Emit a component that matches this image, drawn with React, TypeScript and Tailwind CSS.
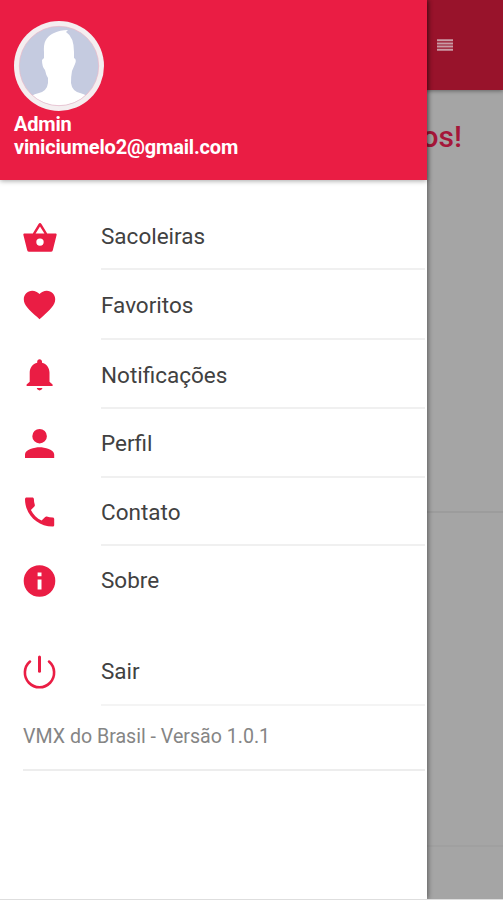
import type { ReactNode } from 'react';

const Icon = ({ children }: { children: ReactNode }) => (
  <svg viewBox="0 0 34 34" className="h-[34px] w-[34px] shrink-0 fill-[#ea1d44]">
    {children}
  </svg>
);

const items = [
  {
    label: 'Sacoleiras',
    height: 'h-[69px]',
    padding: 'pt-1',
    icon: (
      <path
        fillRule="evenodd"
        d="M9.8 14.5 15.4 5.2Q17 3 18.6 5.2L24.2 14.5H32.9Q34 14.5 33.6 16L29.8 31.2Q29.4 32.8 27.8 32.8H6.2Q4.6 32.8 4.2 31.2L.4 16Q0 14.5 1.1 14.5ZM12.6 14.5H21.4L17 7.4ZM17 19.4A3.7 3.7 0 1 0 17 26.8A3.7 3.7 0 1 0 17 19.4Z"
      />
    ),
  },
  {
    label: 'Favoritos',
    height: 'h-[70px]',
    padding: 'pt-1',
    icon: (
      <path d="M16.5 31.2 14.2 29.1C5.8 21.6.8 17 .8 11.2.8 6.4 4.5 2.7 9.2 2.7c2.8 0 5.5 1.3 7.3 3.4 1.7-2.1 4.5-3.4 7.2-3.4 4.8 0 8.5 3.7 8.5 8.5 0 5.8-5 10.4-13.4 18Z" />
    ),
  },
  {
    label: 'Notificações',
    height: 'h-[69px]',
    padding: 'pt-1',
    icon: (
      <path d="M16.6 32.4c1.6 0 2.8-1.1 2.8-2.3h-5.6c0 1.2 1.2 2.3 2.8 2.3ZM26.5 23.7v-9.1c0-4.8-3-8.8-7.5-9.9V3.6c0-1.3-1-2.3-2.4-2.3s-2.4 1-2.4 2.3v1.1c-4.5 1.1-7.5 5.1-7.5 9.9v9.1L3.6 26.4V28h26v-1.6Z" />
    ),
  },
  {
    label: 'Perfil',
    height: 'h-[69px]',
    padding: 'pt-0.5',
    icon: (
      <path d="M16.6 16.5a7.3 7.3 0 1 0 0-14.6 7.3 7.3 0 0 0 0 14.6Zm0 3.8c-4.9 0-14.6 2.4-14.6 7.3v3.3h29.2v-3.3c0-4.9-9.7-7.3-14.6-7.3Z" />
    ),
  },
  {
    label: 'Contato',
    height: 'h-[68px]',
    padding: 'pt-1',
    icon: (
      <path d="M7.9 14.9c2.3 4.6 6.1 8.3 10.7 10.7l3.6-3.6c.4-.4 1.1-.6 1.6-.4 1.8.6 3.8.9 5.8.9.9 0 1.6.7 1.6 1.6V30c0 .9-.7 1.6-1.6 1.6C14.3 31.6 2 19.3 2 4c0-.9.7-1.6 1.6-1.6h5.7c.9 0 1.6.7 1.6 1.6 0 2 .3 4 .9 5.8.2.6.1 1.2-.4 1.6Z" />
    ),
  },
  {
    label: 'Sobre',
    height: 'h-[69px]',
    padding: 'pt-0',
    last: true,
    icon: (
      <path
        fillRule="evenodd"
        d="M16.5 1.2a15.8 15.8 0 1 0 0 31.6 15.8 15.8 0 0 0 0-31.6Zm2 24.4h-3.9V15.5h3.9Zm0-13.4h-3.9V8.6h3.9Z"
      />
    ),
  },
];

const Avatar = () => (
  <svg viewBox="0 0 90 90" className="h-[90px] w-[90px]">
    <defs>
      <clipPath id="face">
        <circle cx="45" cy="45" r="39.5" />
      </clipPath>
    </defs>
    <circle cx="45" cy="45" r="45" fill="#f4eef0" />
    <circle cx="45" cy="45" r="39.7" fill="#c5cbe0" />
    <path
      clipPath="url(#face)"
      fill="#fff"
      d="M30 31C29 19 34 15 40 12Q46 9 54 9L52 11Q60 16 60 31V37Q63 38 61 43L58 50Q57 55 57 62Q58 70 66 72Q74 74 78 80L70 90H20L12 80Q16 74 25 72Q33 70 34 62V57Q32 54 31 49Q28 46 28 39L30 37Z"
    />
    <circle cx="45" cy="45" r="39.7" fill="none" stroke="#e9b9c8" strokeWidth=".7" />
  </svg>
);

const Drawer = () => (
  <aside className="absolute left-0 top-0 z-10 flex h-[899px] w-[427px] flex-col bg-white shadow-[1px_0_5px_rgba(0,0,0,0.45)]">
    <header className="h-[180px] shrink-0 bg-[#ea1d44] pl-[14px] pt-[21px] text-[20px] font-bold leading-[23px] text-white shadow-[0_1px_5px_rgba(0,0,0,0.35)]">
      <Avatar />
      <p className="mt-[2px] w-fit tracking-[-0.2px]">Admin</p>
      <p className="w-fit tracking-[-0.17px]">viniciumelo2@gmail.com</p>
    </header>

    <nav className="mt-[21px] pl-[23px] text-[22.5px] text-[#414141]">
      {items.map((item) => (
        <div key={item.label} className={`flex ${item.height}`}>
          <div className="flex w-[78px] items-center">
            <Icon>{item.icon}</Icon>
          </div>
          <div
            className={`mr-[2px] flex flex-1 items-center ${item.padding} ${item.last ? '' : 'border-b-2 border-[#f0f0f0]'}`}
          >
            {item.label}
          </div>
        </div>
      ))}
      <div className="mt-[22px] flex h-[69px]">
        <div className="flex w-[78px] items-center">
          <Icon>
            <g fill="none" stroke="#ea1d44" strokeWidth="2.6" strokeLinecap="round">
              <path d="M16.5 2V16.2" strokeWidth="3" />
              <path d="M7 6.6a14.6 14.6 0 1 0 19 0" />
            </g>
          </Icon>
        </div>
        <div className="mr-[2px] flex flex-1 items-center border-b-2 border-[#f4f4f4] pt-0.5">Sair</div>
      </div>
    </nav>

    <footer className="ml-[23px] mr-[2px] flex h-[65px] items-center border-b-2 border-[#ededed] pb-0.5 text-[19.6px] text-[#858585]">
      <span>VMX do Brasil - Versão 1.0.1</span>
    </footer>
  </aside>
);

const Page = () => (
  <main className="flex h-[899px] flex-col bg-[#a5a5a5]">
    <div className="flex h-[90px] shrink-0 justify-end bg-[#98132b] pr-[50px] pt-[39px] shadow-[0_1px_4px_rgba(0,0,0,0.4)]">
      <svg viewBox="0 0 16 12" className="h-3 w-4" stroke="#c99ba5" strokeWidth="2">
        <path d="M0 1.2H16M0 4.4H16M0 7.6H16M0 10.8H16" />
      </svg>
    </div>
    <h1 className="mt-[27px] h-[40px] pr-[41px] text-right text-[30px] font-medium leading-[40px] text-[#a5173a]">
      os!
    </h1>
    <div className="mt-[354px] h-[2px] bg-[#9c9c9c]"></div>
    <div className="mt-[332px] h-[2px] bg-[#a0a0a0]"></div>
  </main>
);

const App = () => (
  <div className="relative h-[900px] w-[503px] overflow-hidden border-b border-[#dedede] bg-white font-['Roboto',sans-serif]">
    <Page />
    <Drawer />
  </div>
);

export default App;
